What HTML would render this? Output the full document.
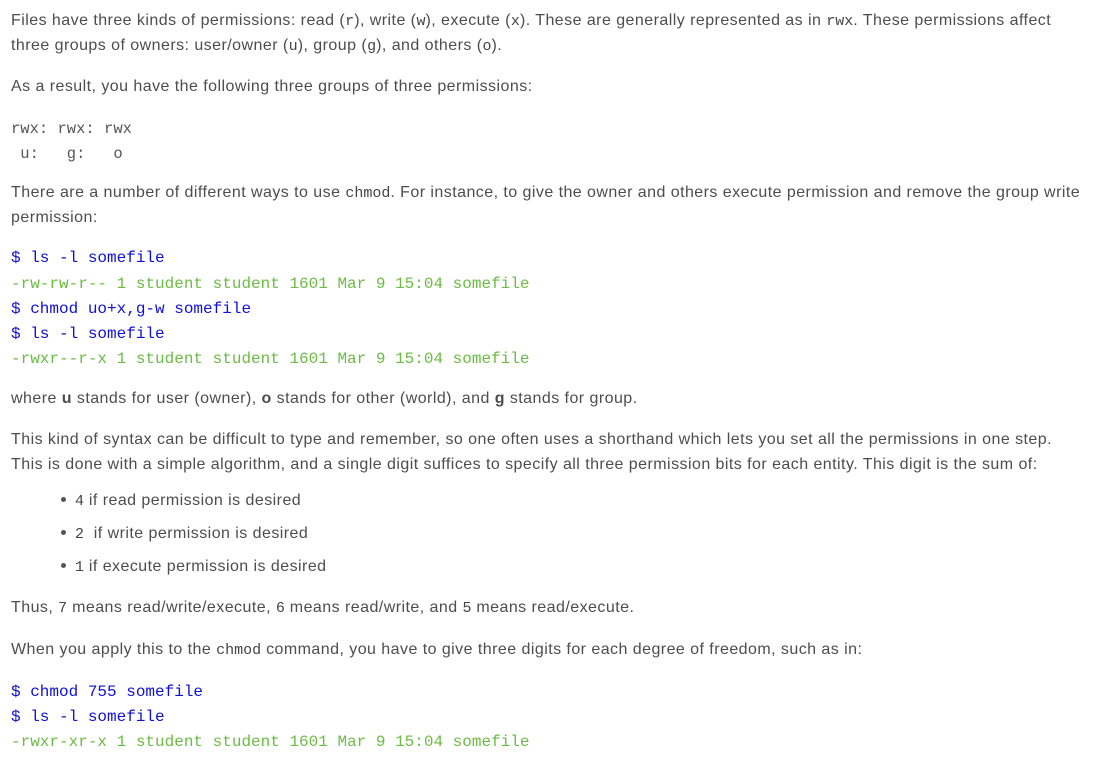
<!DOCTYPE html>
<html><head><meta charset="utf-8"><style>
body{margin:0;width:1099px;height:761px;background:#fff;position:relative;overflow:hidden;font-family:"Liberation Sans",sans-serif;font-size:16px;color:#4d4d4d;}
.l{position:absolute;left:11px;white-space:nowrap;line-height:20px;letter-spacing:0.45px;}
code,.m{font-family:"Liberation Mono","Courier New",monospace;letter-spacing:0;}
code{font-size:15px;color:#444;}
.m{font-size:16px;}
.b{color:#1010d8}.g{color:#6cbb45}.gr{color:#555}
.dot{position:absolute;left:61px;width:5px;height:5px;border-radius:50%;background:#555;}
</style></head><body>
<div class="l" style="top:11px">Files have three kinds of permissions: read (<code>r</code>), write (<code>w</code>), execute (<code>x</code>). These are generally represented as in <code>rwx</code>. These permissions affect</div>
<div class="l" style="top:36px">three groups of owners: user/owner (<code>u</code>), group (<code>g</code>), and others (<code>o</code>).</div>
<div class="l" style="top:77px">As a result, you have the following three groups of three permissions:</div>
<div class="l m gr" style="top:119px;font-size:15.5px">rwx: rwx: rwx</div>
<div class="l m gr" style="top:144px;font-size:15.5px">&nbsp;u:&nbsp;&nbsp;&nbsp;g:&nbsp;&nbsp;&nbsp;o</div>
<div class="l" style="top:183px">There are a number of different ways to use <code>chmod</code>. For instance, to give the owner and others execute permission and remove the group write</div>
<div class="l" style="top:208px">permission:</div>
<div class="l m b" style="top:248px">$ ls -l somefile</div>
<div class="l m g" style="top:274px">-rw-rw-r-- 1 student student 1601 Mar 9 15:04 somefile</div>
<div class="l m b" style="top:299px">$ chmod uo+x,g-w somefile</div>
<div class="l m b" style="top:324px">$ ls -l somefile</div>
<div class="l m g" style="top:349px">-rwxr--r-x 1 student student 1601 Mar 9 15:04 somefile</div>
<div class="l" style="top:389px">where <b>u</b> stands for user (owner), <b>o</b> stands for other (world), and <b>g</b> stands for group.</div>
<div class="l" style="top:430px">This kind of syntax can be difficult to type and remember, so one often uses a shorthand which lets you set all the permissions in one step.</div>
<div class="l" style="top:455px">This is done with a simple algorithm, and a single digit suffices to specify all three permission bits for each entity. This digit is the sum of:</div>
<div class="dot" style="top:497px"></div><div class="l" style="top:491px;left:75px"><code>4</code> if read permission is desired</div>
<div class="dot" style="top:530px"></div><div class="l" style="top:524px;left:75px"><code>2</code>&nbsp; if write permission is desired</div>
<div class="dot" style="top:563px"></div><div class="l" style="top:557px;left:75px"><code>1</code> if execute permission is desired</div>
<div class="l" style="top:598px">Thus, <code>7</code> means read/write/execute, <code>6</code> means read/write, and <code>5</code> means read/execute.</div>
<div class="l" style="top:640px">When you apply this to the <code>chmod</code> command, you have to give three digits for each degree of freedom, such as in:</div>
<div class="l m b" style="top:682px">$ chmod 755 somefile</div>
<div class="l m b" style="top:707px">$ ls -l somefile</div>
<div class="l m g" style="top:732px">-rwxr-xr-x 1 student student 1601 Mar 9 15:04 somefile</div>
</body></html>
